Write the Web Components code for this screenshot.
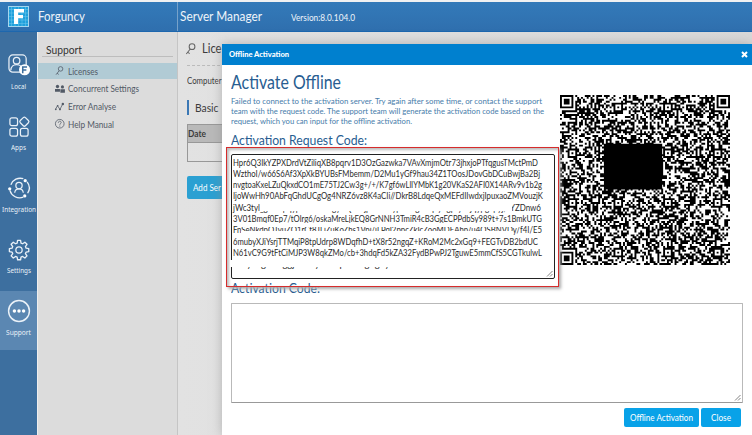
<!DOCTYPE html>
<html lang="en"><head><meta charset="utf-8"><title>Server Manager</title>
<style>html,body{margin:0;width:752px;height:435px;overflow:hidden;background:#dedede;font-family:Lato,"Liberation Sans",sans-serif}</style></head>
<body><server-manager></server-manager>
<script>
const define=(name,html,init)=>customElements.define(name,class extends HTMLElement{
  connectedCallback(){ if(this.shadowRoot) return;
    this.attachShadow({mode:'open'}).innerHTML=html; if(init) init.call(this,this.shadowRoot); }
});
/* Single line of text condensed or widened to reach width "w". */
define('fit-text','<style>:host{display:block;white-space:pre;flex:none}span{display:inline-block;transform-origin:0 50%}</style><span><slot></slot></span>',function(r){
  const s=r.querySelector('span'), w=+this.getAttribute('w');
  const n=s.getBoundingClientRect().width;
  s.style.transform='scaleX('+(w/n)+')';
  s.style.marginRight=(w-n)+'px';
});
const icons={
 local:'<rect x="1" y="1" width="18" height="18" rx="4"/><circle cx="9" cy="7" r="3.4"/><path d="M3 17c0-8 12-8 12 0"/><circle cx="17.3" cy="16.5" r="5.8" fill="#fff" stroke="none"/><path d="M15.4 20v-6.5h4.5M15.4 16.8h3.8" stroke="#3d6f9f" stroke-width="1.6"/>',
 apps:'<rect x="2" y="2" width="8" height="8" rx="2"/><rect x="2" y="13" width="8" height="8" rx="2"/><rect x="13" y="13" width="8" height="8" rx="2"/><rect x="13.3" y="2.1" width="7.6" height="7.6" rx="1.6" transform="rotate(45 17.1 5.9)"/>',
 integration:'<path d="M3 8A10.5 10.5 0 0 1 16 1.8M20 5A10.5 10.5 0 0 1 20.5 17M16 21A10.5 10.5 0 0 1 2 14" stroke-width="1.4"/><circle cx="18" cy="3.8" r="1.7" fill="#fff" stroke="none"/><circle cx="1.8" cy="12.3" r="1.7" fill="#fff" stroke="none"/><circle cx="17.5" cy="19.8" r="1.7" fill="#fff" stroke="none"/><circle cx="11.5" cy="9" r="3.3"/><path d="M7 16.5c.7-5.3 8.3-5.3 9 0"/>',
 settings:'<path stroke-linejoin="round" d="M9.8 1.5h3.4l.5 3 1.8.8 2.6-1.8 2.4 2.4-1.8 2.6.8 1.8 3 .5v3.4l-3 .5-.8 1.8 1.8 2.6-2.4 2.4-2.6-1.8-1.8.8-.5 3H9.8l-.5-3-1.8-.8-2.6 1.8-2.4-2.4 1.8-2.6-.8-1.8-3-.5v-3.400l3-.5.8-1.800-1.800-2.600 2.400-2.400 2.600 1.800 1.800-.8z" transform="translate(1 .1) scale(.92)" stroke-width="1.5"/><circle cx="11.500" cy="11.500" r="3.300"/>',
 support:'<circle cx="11.500" cy="11.500" r="10.900" stroke-width="1.500"/><g fill="#fff" stroke="none"><circle cx="6.700" cy="11.500" r="1.800"/><circle cx="11.500" cy="11.500" r="1.800"/><circle cx="16.300" cy="11.500" r="1.800"/></g>',
 key:'<circle cx="13.500" cy="7" r="5.500"/><path d="M10 11.500 2.500 21M5 17.500l4 3"/>',
 people:'<g fill="currentColor" stroke="none"><circle cx="6" cy="6" r="4"/><circle cx="18" cy="7" r="3.800"/><path d="M0 19v-7h12v7zM13 21v-8h11v8z"/></g>',
 graph:'<path d="M1 18 6 9l6 9L18 6"/><g fill="currentColor" stroke="none"><circle cx="2" cy="18" r="2"/><circle cx="6.500" cy="9" r="2"/><circle cx="12" cy="18" r="2.200"/><circle cx="19" cy="5" r="3"/></g>',
 help:'<circle cx="11.500" cy="11.500" r="10.500"/><path d="M8 9c0-5 7-4.500 7-.5 0 3-3.500 2.500-3.500 5.500M11.500 16v2.500"/>'
};
define('ui-icon','',function(r){
  r.innerHTML='<style>:host{display:block;flex:none}svg{display:block;width:100%;height:100%;overflow:visible}</style><svg viewBox="0 0 23 23" fill="none" stroke="currentColor" stroke-width="'+(this.getAttribute('sw')||1.3)+'">'+icons[this.getAttribute('name')]+'</svg>';
});
define('app-header',`<style>:host{display:flex;align-items:center;box-sizing:border-box;height:32px;border-top:2px solid #f0f1f2;border-bottom:1px solid #1d67ae;background:linear-gradient(#337ab9,#2f6fae);color:#eef4fa}
 .logo{width:21px;height:21px;margin-left:8px}.brand{font-size:13px;margin-left:9px;width:139px}.sep{width:1px;height:29px;background:#77a2ca}.title{font-size:13px;margin-left:2px}.ver{font-size:9px;margin-left:29px;margin-top:2px}.brand,.title{margin-top:-2px}</style>
 <svg class="logo" viewBox="0 0 21 21"><rect width="21" height="21" fill="#1fa0dc"/><path d="M3.500 0v21M7 0v21M10.500 0v21M14 0v21M17.500 0v21M0 3.500h21M0 7h21M0 10.500h21M0 14h21M0 17.500h21" stroke="#70c9ed" stroke-width=".5"/><rect x=".5" y=".5" width="20" height="20" fill="none" stroke="#a5d6ee"/><path d="M6 3h10v3.500H10V9h5v3.300h-5V18H6z" fill="#fff"/></svg>
 <fit-text class="brand" w="47">Forguncy</fit-text><div class="sep"></div><fit-text class="title" w="82">Server Manager</fit-text><fit-text class="ver" w="64">Version:8.0.104.0</fit-text>`);
define('rail-item','',function(r){
  r.innerHTML=`<style>:host{display:flex;flex-direction:column;align-items:center;box-sizing:border-box;height:59px;padding-top:9px;color:#eaf1f8;font:7.500px/11px "Noto Sans",sans-serif}:host([on]){background:#5b87b2}
 ui-icon{width:22px;height:22px;margin-bottom:4.500px}</style><ui-icon name="${this.getAttribute('icon')}"></ui-icon><fit-text w="${this.getAttribute('w')}">${this.getAttribute('label')}</fit-text>`;
});
define('side-rail',`<style>:host{display:flex;flex-direction:column;gap:2.500px;box-sizing:border-box;width:37px;flex:none;background:#3d6f9f;padding-top:13px}</style>
 <rail-item icon="local" w="15" label="Local"></rail-item><rail-item icon="apps" w="15" label="Apps"></rail-item><rail-item icon="integration" w="34" label="Integration"></rail-item><rail-item icon="settings" w="24" label="Settings"></rail-item><rail-item icon="support" on w="25" label="Support"></rail-item>`);
define('menu-item','',function(r){
  r.innerHTML=`<style>:host{display:flex;align-items:center;height:16px;margin-bottom:1.700px;padding-left:17px;gap:3px;font-size:9px;color:#525a66}:host([on]){background:#b1cbd5}ui-icon{width:9.500px;height:9.500px}</style><ui-icon sw="1.900" name="${this.getAttribute('icon')}"></ui-icon><fit-text w="${this.getAttribute('w')}">${this.getAttribute('label')}</fit-text>`;
});
define('side-menu',`<style>:host{display:block;box-sizing:border-box;width:141px;flex:none;background:#dcdcdc;border-left:1px solid #eee;border-right:1px solid #c5c5c5;padding-top:9px}
 header{margin:0 4px 6px;height:15px;border-bottom:1px solid #bdbdbd;padding-left:4px;font-size:11px;line-height:18px;color:#333}</style>
 <header><fit-text w="36">Support</fit-text></header><menu-item icon="key" on w="30" label="Licenses"></menu-item><menu-item icon="people" w="71" label="Concurrent Settings"></menu-item><menu-item icon="graph" w="48" label="Error Analyse"></menu-item><menu-item icon="help" w="46" label="Help Manual"></menu-item>`);
define('license-page',`<style>:host{display:block;flex:1;padding-left:9px;background:linear-gradient(90deg,#e2e2e2,#d8d8d8);color:#3c3c3c;box-sizing:border-box}
 .h{display:flex;align-items:center;gap:5px;height:33px;border-bottom:1px dashed #bbb;font-size:12.500px}.h ui-icon{width:12px;height:12px;color:#666;margin-left:-2px}
 .c{font-size:8.500px;line-height:12px;margin-top:9px}.b{border-left:2px solid #3b78b5;padding-left:6px;font-size:11.500px;line-height:15px;height:15px;margin-top:13px}
 table{width:100%;border-collapse:collapse;margin-top:9px;font-size:8.500px}th{background:#b9b9b9;text-align:left;height:17px;padding:0}td{height:18px;padding:0}td,th{border:1px solid #989898}
 button{display:block;margin-top:14px;width:80px;height:23px;border:0;border-radius:2px;background:#2ba0d2;color:#fff;text-align:left;padding:0 6px;font:8.500px Lato}</style>
 <div class="h"><ui-icon name="key" sw="2"></ui-icon><fit-text w="19.500">Lice</fit-text></div><div class="c"><fit-text w="34.500">Computer</fit-text></div><div class="b"><fit-text w="23.500">Basic</fit-text></div>
 <table><tr><th><fit-text w="18">Date</fit-text></th></tr><tr><td></td></tr></table><button><fit-text w="28">Add Ser</fit-text></button>`);
/* 89-module code symbol: finder, timing and alignment patterns with scattered data modules. */
define('code-symbol','',function(r){
  const N=89; let seed=4271; const rand=()=>{seed=(seed*1664525+1013904223)>>>0;return seed/4294967296};
  const g=Array.from({length:N},()=>Array.from({length:N},()=>rand()<.53));
  const put=(cx,cy,R,fn)=>{for(let y=-R;y<=R;y++)for(let x=-R;x<=R;x++){const a=cy+y,b=cx+x;if(a>=0&&b>=0&&a<N&&b<N)g[a][b]=fn(Math.max(Math.abs(x),Math.abs(y)))}};
  for(let i=0;i<N;i++)g[6][i]=g[i][6]=i%2===0;
  const p=[6,30,56,82];for(const x of p)for(const y of p)put(x,y,2,d=>d!==1);
  for(const [x,y] of [[3,3],[85,3],[3,85]])put(x,y,4,d=>d!==2&&d!==4);
  let d='';for(let y=0;y<N;y++)for(let x=0;x<N;x++)if(g[y][x]){let e=x;while(e<N&&g[y][e])e++;d+='M'+x+' '+y+'h'+(e-x)+'v1h-'+(e-x)+'z';x=e}
  r.innerHTML='<style>:host{display:block;width:170px;height:170px}svg{display:block}</style><svg width="170" height="170" viewBox="0 0 89 89"><path d="'+d+'"/><path d="M23 25.500h30.500v24H23z"/></svg>';
});
define('code-area',`<style>:host{display:block;position:relative;box-sizing:border-box;border:1px solid #b9b9b9;border-bottom-color:#999;border-radius:1px;background:#fff}
 :host([strong]){border:1.500px solid #222;border-radius:2px}.grip{position:absolute;right:1px;bottom:1px}</style><slot></slot><svg class="grip" width="7" height="7"><path d="M1 6.500 6.500 1M4 6.500 6.500 4" stroke="#666" stroke-width=".8"/></svg>`);
define('request-lines',`<style>:host{display:block;position:relative;padding:1.500px 0 0 1px;font-size:8.800px;line-height:11.330px;color:#2b2b2b}fit-text{height:11.330px}
 i{position:absolute;background:#fff}</style>
 <fit-text w="305">Hpr6Q3IkYZPXDrdVtZiliqXB8pqrv1D3OzGazwka7VAvXmjmOtr73jhxjoPTfqgusTMctPmD</fit-text>
 <fit-text w="307">WzthoI/w66S6Af3XpXkBYUBsFMbemm/D2Mu1yGf9hau34Z1TOosJDovGbDCuBwjBa2Bj</fit-text>
 <fit-text w="309">nvgtoaKxeLZuQkxdCO1mE75TJ2Cw3g+/+/K7gf6wLlIYMbK1g20VKaS2AFI0X14ARv9v1b2g</fit-text>
 <fit-text w="310">IjoWwHh90AbFqGhdUCgOg4NRZ6vz8K4aCIi//DkrB8LdqeQxMEFdIIwdxjIpuxaoZMVouzjK</fit-text>
 <fit-text w="308">jWc3tyl_gamopqyp3Gnd7bsgy5Qv4ejpxa8Rdyp2Kbgzmqay7gprys4jqypgxpyj,3YZDnw6</fit-text>
 <fit-text w="309">3V01Bmqf0Ep7/tOlrg6/oskaMreLjkEQ8GrNNH3TmiR4cB3GgECPPdbSy989t+7s1BmkUTG</fit-text>
 <fit-text w="309">FnSeNkdpOTyuZQ1rCf8JLjZuKoZhs1Vpj/jLPqI2ppcZkIcZooMDEAhp/u4QSBNVDy/f4I/E5</fit-text>
 <fit-text w="305">6mubyXJiYsrjTTMqiP8tpUdrp8WDqfhD+tX8r52ngqZ+KRoM2Mc2xGq9+FEGTvDB2bdUC</fit-text>
 <fit-text w="309">N61vC9G9tFtCiMJP3W8qkZMo/cb+3hdqFd5kZA32FydBPwPJ2TguwE5mmCfS5CGTkulwL</fit-text>
 <fit-text w="160">ndfyxkgBmfggjHdzsyh8cFpddvxg5ghyt</fit-text>
 <i style="left:29px;top:46px;width:251px;height:9.500px"></i><i style="left:9px;top:67.500px;width:279px;height:4px"></i><i style="left:9px;top:76px;width:272px;height:4px"></i><i style="left:-2px;top:105px;width:199px;height:7px"></i>`);
define('red-frame','<style>:host{display:block;box-sizing:border-box;width:333px;height:140px;border:1.500px solid #d62c2c;box-shadow:2px 2px 3px #aaa,inset 2px 2px 3px #bbb;padding:6px 3px 6px 4px}</style><slot></slot>');
define('activation-dialog',`<style>:host{position:absolute;left:222px;top:44px;width:530px;height:391px;background:#fff;box-shadow:0 0 10px #8888;color:#285d91}
 .bar{display:flex;align-items:center;justify-content:space-between;height:21px;background:#0080cf;color:#fff;font-size:7.500px;font-weight:900;padding:0 4px 0 7px}
 .top{display:flex;gap:0;height:218px}.left{width:338px;flex:none;padding-left:9px;box-sizing:border-box}
 .t{font-size:19px;line-height:24px;margin-top:5px;height:26px}.d{font-size:8.400px;line-height:9.800px;color:#477caa;margin-top:1px;height:32px}
 .s{font-size:12.600px;line-height:16px}.s.first{margin-top:4px;height:14px}.s.second{position:relative;margin-top:-2px;padding-left:9px;height:16px}
 red-frame{margin-left:-5px;position:relative;z-index:2}.first-area{height:125px}.second-area{margin:6px 9px 0;height:100px}
 code-symbol{margin:30px 0 0 0}.buttons{display:flex;justify-content:flex-end;gap:2px;padding:5px 11px 0 0}button{display:flex;align-items:center;justify-content:center;height:19px;border:0;border-radius:2px;background:#08a2e8;color:#fff;padding:0;font:8.500px Lato,sans-serif}</style>
 <div class="bar"><fit-text w="60">Offline Activation</fit-text><svg width="7" height="7"><path d="M1 1 6 6M6 1 1 6" stroke="#fff" stroke-width="2"/></svg></div>
 <div class="top"><div class="left"><div class="t"><fit-text w="110">Activate Offline</fit-text></div>
 <div class="d"><fit-text w="311">Failed to connect to the activation server. Try again after some time, or contact the support</fit-text><fit-text w="313">team with the request code. The support team will generate the activation code based on the</fit-text><fit-text w="181">request, which you can input for the offline activation.</fit-text></div>
 <div class="s first"><fit-text w="136">Activation Request Code:</fit-text></div><red-frame><code-area strong class="first-area"><request-lines></request-lines></code-area></red-frame></div><code-symbol></code-symbol></div>
 <div class="s second"><fit-text w="89">Activation Code:</fit-text></div><code-area class="second-area"></code-area><div class="buttons"><button style="width:75px"><fit-text w="63">Offline Activation</fit-text></button><button style="width:40px"><fit-text w="20">Close</fit-text></button></div>`);
define('server-manager',`<style>:host{display:flex;flex-direction:column;position:relative;width:752px;height:435px;overflow:hidden}.body{display:flex;flex:1}</style>
 <app-header></app-header><div class="body"><side-rail></side-rail><side-menu></side-menu><license-page></license-page></div><activation-dialog></activation-dialog>`);
</script></body></html>
